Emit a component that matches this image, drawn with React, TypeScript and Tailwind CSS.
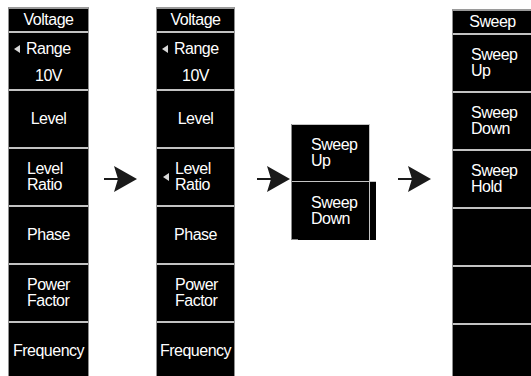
import type { ReactNode } from "react";

type Item = {
  lines?: string[];
  label?: string;
  marker?: boolean;
  range?: boolean;
};

const voltageItems: Item[] = [
  { range: true },
  { label: "Level" },
  { lines: ["Level", "Ratio"] },
  { label: "Phase" },
  { lines: ["Power", "Factor"] },
  { label: "Frequency" },
];

const sweepItems: Item[] = [
  { lines: ["Sweep", "Up"] },
  { lines: ["Sweep", "Down"] },
  { lines: ["Sweep", "Hold"] },
  {},
  {},
  {},
];

function Marker() {
  return (
    <span className="mr-[6px] inline-block h-0 w-0 border-y-[4px] border-r-[6px] border-y-transparent border-r-[#d8d8d8]" />
  );
}

function Panel({ item }: { item: Item }) {
  if (item.range) {
    return (
      <div className="flex h-[56px] flex-col bg-black">
        <div className="flex h-[30px] items-center pl-[5px] pt-[2px]">
          <Marker />
          Range
        </div>
        <div className="flex h-[26px] items-center justify-center">10V</div>
      </div>
    );
  }
  if (item.lines) {
    return (
      <div className="flex h-[56px] items-center bg-black pl-[6px]">
        <span className="flex w-[12px] items-center">
          {item.marker && <Marker />}
        </span>
        <div>
          {item.lines.map((l) => (
            <div key={l}>{l}</div>
          ))}
        </div>
      </div>
    );
  }
  return (
    <div className="flex h-[56px] items-center justify-center bg-black">
      {item.label}
    </div>
  );
}

function Column({
  items,
  title,
  className,
}: {
  items: Item[];
  title: string;
  className: string;
}) {
  return (
    <div
      className={`flex shrink-0 flex-col gap-[2px] border-x border-t-2 border-x-[#8f8f8f] border-t-[#9a9a9a] bg-[#c2c2c2] ${className}`}
    >
      <div className="flex h-[22px] items-center justify-center bg-black">
        {title}
      </div>
      {items.map((item, i) => (
        <Panel item={item} key={i} />
      ))}
    </div>
  );
}

function Arrow({ className }: { className: string }) {
  return (
    <svg
      className={`shrink-0 ${className}`}
      height="28"
      viewBox="0 0 34 28"
      width="34"
    >
      <rect fill="#1a1a1a" height="2" width="14" x="0" y="12" />
      <polygon fill="#1a1a1a" points="10,0 33,13 10,26 14,13" />
    </svg>
  );
}

function Popup({ children }: { children?: ReactNode }) {
  return (
    <div className="relative mt-[124px] flex w-[85px] shrink-0 flex-col border-l border-[#8a8a8a]">
      <div className="flex h-[57px] w-[78px] items-center border-t border-r border-[#c4c4c4] bg-black pl-[19px]">
        <div>
          <div>Sweep</div>
          <div>Up</div>
        </div>
      </div>
      <div className="h-[1px] w-[84px] bg-[#c4c4c4]" />
      <div className="flex h-[58px] w-[84px] bg-black">
        <div className="flex w-[78px] items-center border-r border-[#c4c4c4] pl-[19px]">
          <div>
            <div>Sweep</div>
            <div>Down</div>
          </div>
        </div>
      </div>
      <span className="absolute bottom-0 left-0 h-[1px] w-[6px] bg-[#8a8a8a]" />
      {children}
    </div>
  );
}

export default function App() {
  const ratioMarked = voltageItems.map((it) =>
    it.lines && it.lines[1] === "Ratio" ? { ...it, marker: true } : it
  );

  return (
    <div className="flex h-[376px] w-[531px] items-start overflow-hidden bg-white font-['Liberation_Sans',Arial,sans-serif] text-[16px] leading-[16px] tracking-[-0.5px] text-white">
      <Column className="ml-[8px] mt-[7px] w-[81px]" items={voltageItems} title="Voltage" />
      <Arrow className="ml-[15px] mt-[166px]" />
      <Column className="ml-[18px] mt-[7px] w-[79px]" items={ratioMarked} title="Voltage" />
      <Arrow className="ml-[22px] mt-[166px]" />
      <Popup />
      <Arrow className="ml-[22px] mt-[166px]" />
      <Column className="ml-[20px] mt-[9px] w-[81px]" items={sweepItems} title="Sweep" />
    </div>
  );
}
